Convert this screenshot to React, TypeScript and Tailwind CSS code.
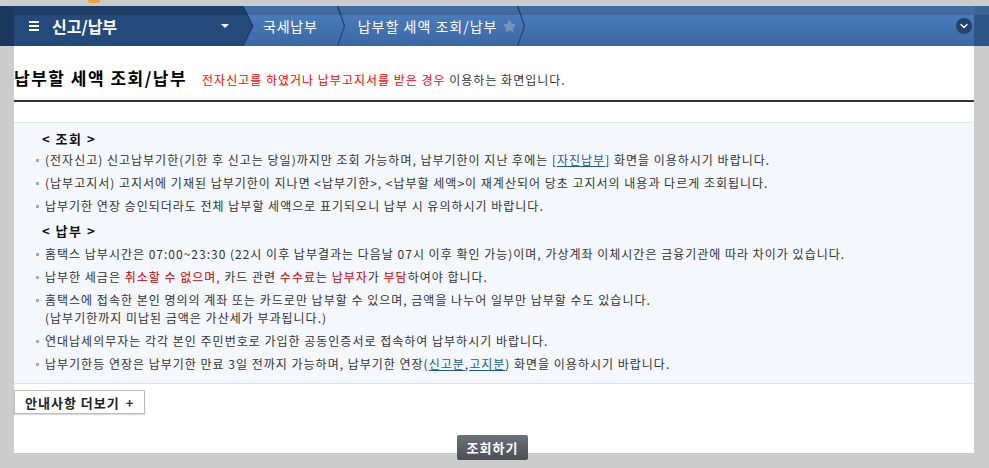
import { Star, ChevronDown } from 'lucide-react';

const Chevron = () => (
  <svg width="9" height="40" viewBox="0 0 9 40" className="shrink-0">
    <polyline points="0.5,0 7.5,20 0.5,40" fill="none" stroke="#24467a" strokeWidth="1.3" />
  </svg>
);

const Bullet = ({ children }: { children: React.ReactNode }) => (
  <li className="flex items-start mt-[5px] first:mt-0">
    <span className="mt-[8px] mr-[6px] w-[3px] h-[3px] shrink-0 bg-[#a9a9a9]" />
    <span>{children}</span>
  </li>
);

const Red = ({ children }: { children: React.ReactNode }) => (
  <span className="text-[#cc0000]">{children}</span>
);

const Link = ({ children }: { children: React.ReactNode }) => (
  <a href="#" className="text-[#1b5a98] underline">
    {children}
  </a>
);

const App = () => {
  return (
    <div className="min-h-screen bg-[#cccccc] font-['Noto_Sans_CJK_KR',sans-serif]">
      {/* 상단 로고 조각 */}
      <div className="h-[6px]">
        <div className="ml-[88px] w-[12px] h-[3px] rounded-b-full bg-[#e8a23a]" />
      </div>

      {/* 메뉴 바 */}
      <nav className="relative flex h-[40px]">
        <div className="w-[14px] bg-[#1b375d]" />
        <div className="w-[229px] bg-[#234a7a] flex items-center pl-[15px] pr-[14px]">
          <div className="flex flex-col gap-[2px]">
            <span className="block w-[10px] h-[2px] bg-white" />
            <span className="block w-[10px] h-[2px] bg-white" />
            <span className="block w-[10px] h-[2px] bg-white" />
          </div>
          <span className="ml-[13px] text-[16px] font-bold text-white leading-none">신고/납부</span>
          <span className="ml-auto w-0 h-0 border-x-[4px] border-x-transparent border-t-[4px] border-t-white" />
        </div>
        <div className="flex-1 flex items-center bg-gradient-to-b from-[#4d81c1] to-[#3a68a3]">
          <svg width="11" height="40" viewBox="0 0 11 40" className="shrink-0">
            <polygon points="0,0 10,20 0,40" fill="#234a7a" />
            <polyline points="0,0 10,20 0,40" fill="none" stroke="#1a3658" strokeWidth="1" />
          </svg>
          <span className="ml-[9px] text-[14px] tracking-[0.8px] text-white leading-none">국세납부</span>
          <span className="ml-[19px] flex">
            <Chevron />
          </span>
          <span className="ml-[12px] text-[14px] tracking-[1px] text-white leading-none">납부할 세액 조회/납부</span>
          <Star size={13} className="ml-[6px] fill-[#7893bc] text-[#7893bc]" />
          <span className="ml-[1px] flex">
            <Chevron />
          </span>
          <div className="ml-auto mr-[2px] w-[16px] h-[16px] rounded-full bg-[#23426c] flex items-center justify-center">
            <ChevronDown size={12} strokeWidth={2.5} className="text-white" />
          </div>
        </div>
        <div className="w-[15px] flex flex-col">
          <div className="h-[9px] bg-[#3b6597]" />
          <div className="flex-1 bg-[#2e5588]" />
        </div>
        <div className="absolute left-[14px] right-[15px] top-0 h-[9px] bg-black/15 pointer-events-none" />
      </nav>

      {/* 본문 */}
      <div className="ml-[14px] w-[960px] h-[407px] bg-white">
        <div className="flex items-baseline pt-[20px] pb-[10px] border-b-2 border-[#333]">
          <h2 className="text-[17px] font-bold tracking-[1.5px] text-black leading-[24px]">납부할 세액 조회/납부</h2>
          <p className="ml-[15px] text-[12px] tracking-[1px] text-[#333]">
            <span className="text-[#ff0000]">전자신고를 하였거나 납부고지서를 받은 경우</span> 이용하는 화면입니다.
          </p>
        </div>

        <div className="mt-[20px] border-y border-[#dbe4ee] bg-[#f4f7fb] pt-[7px] pb-[10px] pl-[22px] text-[12px] tracking-[1px] leading-[18px] text-[#333]">
          <h4 className="pl-[6px] text-[13px] font-bold tracking-[1.5px] text-[#111]">&lt; 조회 &gt;</h4>
          <ul className="mt-[3px]">
            <Bullet>
              (전자신고) 신고납부기한(기한 후 신고는 당일)까지만 조회 가능하며, 납부기한이 지난 후에는 [<Link>자진납부</Link>] 화면을 이용하시기 바랍니다.
            </Bullet>
            <Bullet>
              (납부고지서) 고지서에 기재된 납부기한이 지나면 &lt;납부기한&gt;, &lt;납부할 세액&gt;이 재계산되어 당초 고지서의 내용과 다르게 조회됩니다.
            </Bullet>
            <Bullet>납부기한 연장 승인되더라도 전체 납부할 세액으로 표기되오니 납부 시 유의하시기 바랍니다.</Bullet>
          </ul>

          <h4 className="mt-[7px] pl-[6px] text-[13px] font-bold tracking-[1.5px] text-[#111]">&lt; 납부 &gt;</h4>
          <ul className="mt-[5px]">
            <Bullet>
              홈택스 납부시간은 07:00~23:30 (22시 이후 납부결과는 다음날 07시 이후 확인 가능)이며, 가상계좌 이체시간은 금융기관에 따라 차이가 있습니다.
            </Bullet>
            <Bullet>
              납부한 세금은 <Red>취소할 수 없으며,</Red> 카드 관련 <Red>수수료</Red>는 <Red>납부자</Red>가 <Red>부담</Red>하여야 합니다.
            </Bullet>
            <Bullet>
              홈택스에 접속한 본인 명의의 계좌 또는 카드로만 납부할 수 있으며, 금액을 나누어 일부만 납부할 수도 있습니다.
              <br />
              (납부기한까지 미납된 금액은 가산세가 부과됩니다.)
            </Bullet>
            <Bullet>연대납세의무자는 각각 본인 주민번호로 가입한 공동인증서로 접속하여 납부하시기 바랍니다.</Bullet>
            <Bullet>
              납부기한등 연장은 납부기한 만료 3일 전까지 가능하며, 납부기한 연장(<Link>신고분</Link>,<Link>고지분</Link>) 화면을 이용하시기 바랍니다.
            </Bullet>
          </ul>
        </div>

        <button className="mt-[6px] h-[24px] px-[10px] border border-[#bdbdbd] bg-white shadow-[0_1px_1px_rgba(0,0,0,0.15)] text-[13px] font-bold tracking-[1px] text-[#222] leading-none">
          안내사항 더보기 <span className="ml-[2px] text-[#333]">+</span>
        </button>
      </div>

      <div className="-mt-[18px] flex justify-center pr-[4px]">
        <button className="h-[25px] px-[10px] rounded-[2px] bg-gradient-to-b from-[#6c7279] to-[#4a4f56] text-[13px] font-bold tracking-[1px] text-white leading-none">
          조회하기
        </button>
      </div>
    </div>
  );
};

export default App;
